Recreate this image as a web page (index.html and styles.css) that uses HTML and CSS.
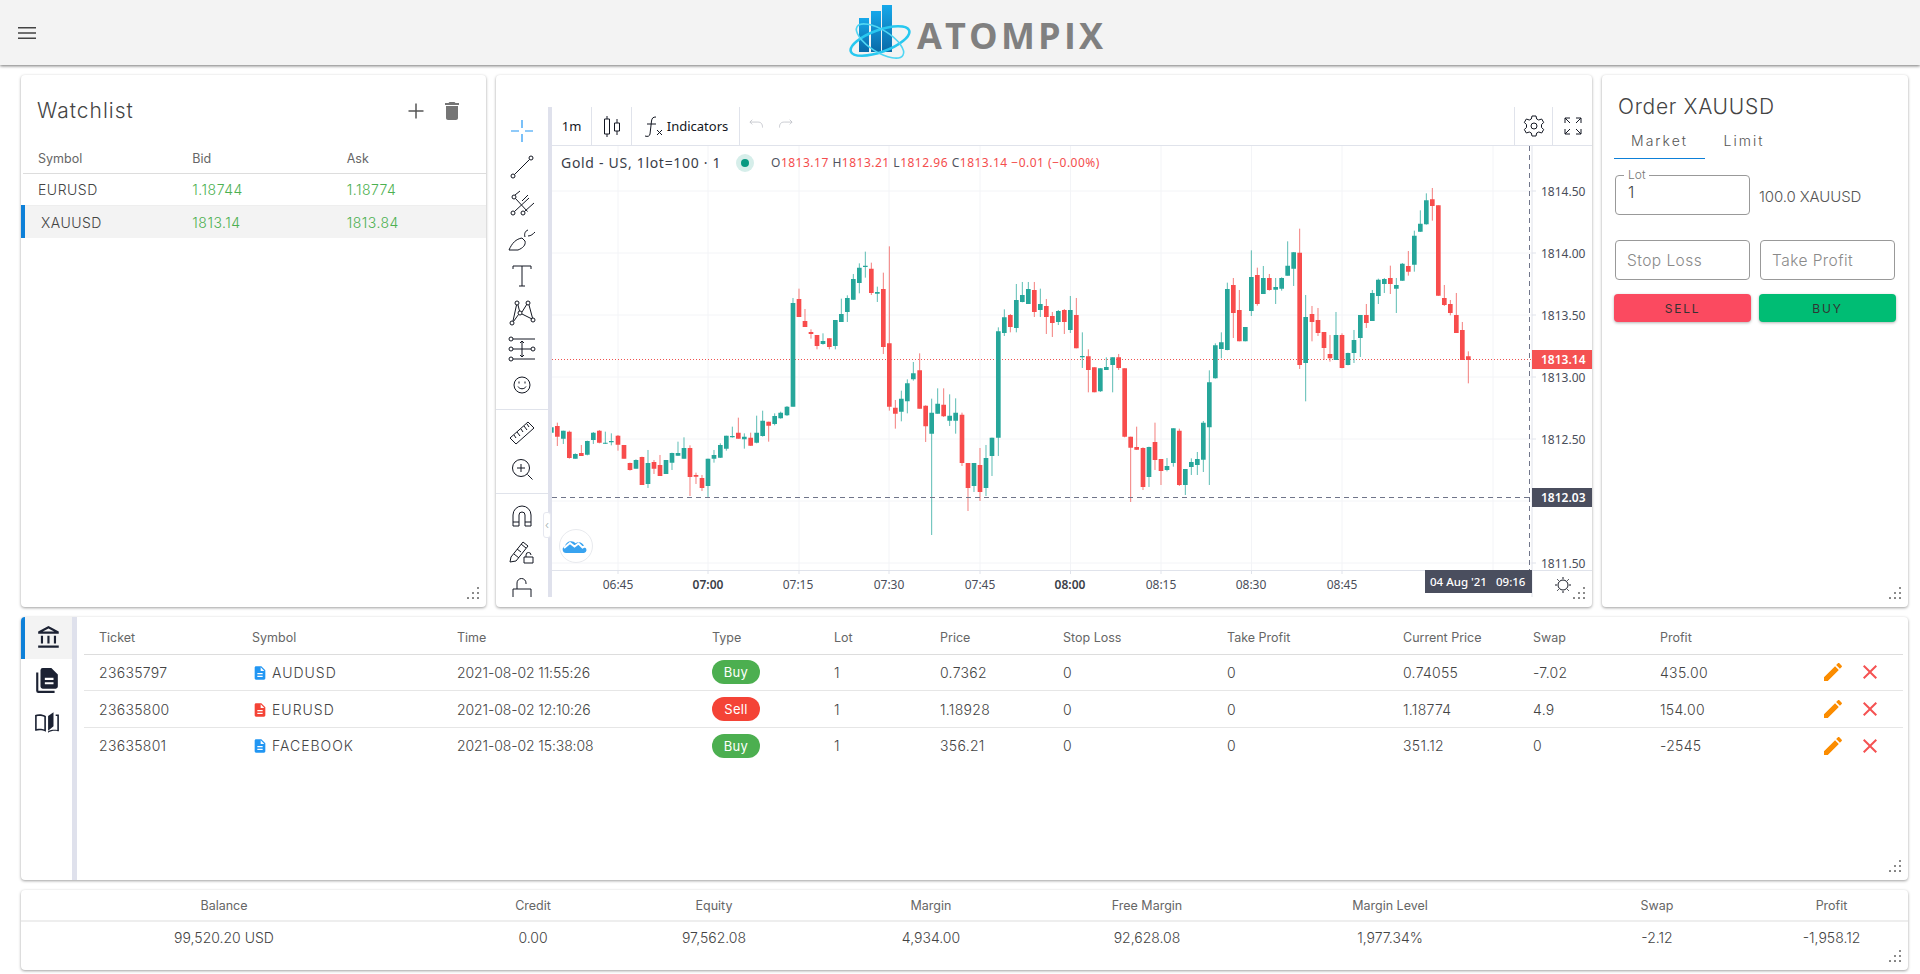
FILE: index.html
```html
<!DOCTYPE html>
<html lang="en">
<head>
<meta charset="utf-8">
<title>Atompix</title>
<link rel="stylesheet" href="styles.css">
</head>
<body>
<header class="topbar">
  <svg class="menu-icon" viewBox="0 0 24 24"><path d="M3 18h18v-1.4H3zm0-5.3h18v-1.4H3zM3 6v1.4h18V6z"/></svg>
  <div class="logo">
    <svg class="logo-mark" viewBox="0 0 66 60">
      <defs><linearGradient id="bar" x1="0" y1="0" x2="0" y2="1"><stop offset="0" stop-color="#16a8ea"/><stop offset="1" stop-color="#0a6aa8"/></linearGradient></defs>
      <rect x="11" y="15" width="10" height="34" fill="url(#bar)"/>
      <rect x="23" y="8" width="10" height="41" fill="url(#bar)"/>
      <rect x="34" y="2" width="10" height="47" fill="url(#bar)"/>
      <ellipse cx="32" cy="38" rx="31" ry="11" transform="rotate(-20 32 38)" fill="none" stroke="#28c8f0" stroke-width="2.6"/>
      <ellipse cx="32" cy="38" rx="27" ry="11" transform="rotate(32 32 38)" fill="none" stroke="#4fd5f3" stroke-width="1.6"/>
    </svg>
    <span class="logo-text">ATOMPIX</span>
  </div>
</header>

<main class="workspace">
  <section class="panel watchlist">
    <div class="panel-head">
      <h2 class="panel-title">Watchlist</h2>
      <div class="head-actions">
        <svg class="icon-plus" viewBox="0 0 24 24"><path d="M12 4.5v15M4.500 12h15"/></svg>
        <svg class="icon-trash" viewBox="0 0 24 24"><path d="M6 19c0 1.100.9 2 2 2h8c1.100 0 2-.9 2-2V7H6v12zM19 4h-3.500l-1-1h-5l-1 1H5v2h14V4z"/></svg>
      </div>
    </div>
    <table class="watch-table">
      <thead><tr><th>Symbol</th><th>Bid</th><th>Ask</th></tr></thead>
      <tbody>
        <tr><td>EURUSD</td><td class="up">1.18744</td><td class="up">1.18774</td></tr>
        <tr class="selected"><td>XAUUSD</td><td class="up">1813.14</td><td class="up">1813.84</td></tr>
      </tbody>
    </table>
    <svg class="grip" viewBox="0 0 12 12"><path d="M11 1v.01M6 6v.01M11 6v.01M1 11v.01M6 11v.01M11 11v.01"/></svg>
  </section>

  <section class="panel chart-panel">
    <div class="chart-frame">
      <nav class="tools">
        <div class="tool-group">
          <span class="tool"><svg class="tool-icon blue" viewBox="0 0 28 28"><path d="M14 3v8M14 17v8M3 14h8M17 14h8"/></svg></span>
          <span class="tool"><svg class="tool-icon" viewBox="0 0 28 28"><circle cx="5" cy="23" r="2"/><circle cx="23" cy="5" r="2"/><path d="M6.500 21.500l15-15"/></svg></span>
          <span class="tool"><svg class="tool-icon" viewBox="0 0 28 28"><circle cx="6" cy="7" r="2"/><circle cx="5" cy="23" r="2"/><circle cx="15" cy="23" r="2"/><path d="M7.500 8.500l12 13M6.500 21.500L21 8M16.500 21.500L26 13M7 5l5-4M14 11l6-6"/></svg></span>
          <span class="tool"><svg class="tool-icon" viewBox="0 0 28 28"><path d="M1 24h9c5-2 8-5 7-9l-3-3c-6 1-10 5-13 12zM17 11c-1-3 0-6 3-7M20 10c3 0 5-2 7-4"/></svg></span>
          <span class="tool"><svg class="tool-icon" viewBox="0 0 28 28"><path d="M5 7V4h18v3M14 4v20M11 24h6"/></svg></span>
          <span class="tool"><svg class="tool-icon" viewBox="0 0 28 28"><circle cx="4" cy="24" r="2"/><circle cx="9" cy="4" r="2"/><circle cx="12" cy="14" r="2"/><circle cx="20" cy="4" r="2"/><circle cx="25" cy="21" r="2"/><path d="M5 22L8.500 6M10 6l1.500 6M5.500 22.500l5-7M14 13l5-8M14 15l10 5M21 6l3.500 13"/></svg></span>
          <span class="tool"><svg class="tool-icon" viewBox="0 0 28 28"><circle cx="3" cy="4" r="2"/><circle cx="3" cy="14" r="2"/><circle cx="25" cy="14" r="2"/><circle cx="3" cy="24" r="2"/><path d="M5 4h22M5 14h18M5 24h22M14 6v16M12 8l2-2 2 2M12 20l2 2 2-2"/></svg></span>
          <span class="tool"><svg class="tool-icon" viewBox="0 0 28 28"><circle cx="14" cy="14" r="8"/><path d="M10 15.500c1.500 3 6.500 3 8 0M11 10.500v2M17 10.500v2"/></svg></span>
        </div>
        <div class="tool-group tool-group-mid">
          <span class="tool"><svg class="tool-icon" viewBox="0 0 28 28"><path d="M2 19L20 3l6 6L8 25zM6 16l2 3M9 13l3 4M13 10l2 3M16 7l3 4M19 5l2 3"/></svg></span>
          <span class="tool"><svg class="tool-icon" viewBox="0 0 28 28"><circle cx="13" cy="13" r="8.500"/><path d="M9 13h8M13 9v8M19.500 19.500l5 5"/></svg></span>
        </div>
        <div class="tool-group tool-group-last">
          <span class="tool"><svg class="tool-icon" viewBox="0 0 28 28"><path d="M5 24V13a9 9 0 0 1 18 0v11h-6V13a3 3 0 0 0-6 0v11zM5 20h6M17 20h6"/></svg></span>
          <span class="tool"><svg class="tool-icon" viewBox="0 0 28 28"><path d="M3 19L15 4l5 4L8 23l-6 1zM6 16l5 4M13 6l5 4M9 11l4 3M16 25v-6h9v6zM18 19v-2a2.500 2.500 0 0 1 5 0"/></svg></span>
          <span class="tool"><svg class="tool-icon" viewBox="0 0 28 28"><path d="M5 26V14h18v12M9 14V8a4.500 4.500 0 0 1 9 0v1"/></svg></span>
        </div>
      </nav>
      <div class="collapse-handle">‹</div>
      <div class="chart-column">
        <div class="chart-toolbar">
          <span class="tb-item tb-interval">1m</span>
          <span class="tb-item tb-candle"><svg class="tb-icon" viewBox="0 0 28 28"><path d="M9 4v3M9 22v3M6.500 7h5v15h-5zM19 7v4M19 19v4M16.500 11h5v8h-5z"/></svg></span>
          <span class="tb-item tb-ind">
            <svg class="tb-icon" viewBox="0 0 28 28"><path d="M17 5c-3 0-4 1-4.500 4l-1.500 13c-.3 2-2 3-5 2M8 12h9M18 18l5 5M23 18l-5 5"/></svg>
            <span>Indicators</span>
          </span>
          <span class="tb-undo">
            <svg class="tb-icon faint" viewBox="0 0 28 28"><path d="M8 12l-3-3 3-3M5 9h10c4 0 6 2 6 7"/></svg>
            <svg class="tb-icon faint" viewBox="0 0 28 28"><path d="M20 12l3-3-3-3M23 9H13c-4 0-6 2-6 7"/></svg>
          </span>
          <span class="tb-spacer"></span>
          <span class="tb-item tb-end"><svg class="tb-icon" viewBox="0 0 28 28"><circle cx="14" cy="14" r="3"/><path d="M12 4h4l.7 3 2 1 3-1 2 3.500-2.200 2v3l2.200 2-2 3.500-3-1-2 1-.7 3h-4l-.7-3-2-1-3 1-2-3.500 2.200-2v-3L4.300 10.500l2-3.500 3 1 2-1z"/></svg></span>
          <span class="tb-item tb-last"><svg class="tb-icon" viewBox="0 0 28 28"><path d="M6 11V6h5M6 6l5 5M17 6h5v5M22 6l-5 5M6 17v5h5M6 22l5-5M22 17v5h-5M22 22l-5-5"/></svg></span>
        </div>
        <svg class="chart" viewBox="552 146 1040 451">
          <g class="grid">
            <path d="M552 191H1532M552 253H1532M552 315H1532M552 377H1532M552 439H1532M552 501H1532M552 563H1532"/>
            <path d="M618 146V570M708 146V570M799 146V570M889 146V570M980 146V570M1070.500 146V570M1161 146V570M1251.500 146V570M1342 146V570M1493 146V570"/>
          </g>
          <path class="price-line" d="M552 359.500H1532"/>
          <g transform="translate(550 170) scale(.33333)">
            <path class="wick-g" d="M4 772V788M40 782V822M76 850V866M112 812V856M130 786V822M166 785V822M184 790V826M258 868V896M294 840V954M348 870V912M366 848V900M384 815V858M402 802V866M474 866V982M492 840V878M511 820V864M529 797V842M547 770V803M583 790V836M620 737V820M638 722V800M674 730V766M692 725V746M711 708V738M729 384V710M819 490V524M856 450V538M874 386V456M892 376V456M910 312V390M928 280V370M946 245V323M982 350V396M1054 662V754M1072 628V730M1090 576V632M1145 686V1095M1163 655V731M1199 673V768M1217 685V791M1272 879V966M1308 825V978M1326 803V918M1345 472V858M1363 418V498M1399 342V487M1417 336V397M1435 336V402M1471 356V441"/>
            <path class="wick-r" d="M22 758V828M58 782V866M94 825V858M148 780V820M204 795V842M222 825V866M240 878V902M276 860V945M312 870V912M330 855V918M420 826V978M438 908V942M456 915V963M565 743V806M602 788V828M656 755V815M747 356V441M765 417V471M783 478V506M801 495V538M838 505V538M964 278V375M1000 308V552M1018 229V722M1036 690V776M1109 550V716M1127 706V816M1181 655V741M1236 728V888M1254 879V1023M1290 834V993M1381 432V487M1453 336V441M1489 387V492"/>
            <path class="body-g" d="M4 772V788M40 782V806M76 852V866M112 813V854M130 788V810M166 818V821M184 813V817M258 870V896M294 879V942M348 870V912M366 849V878M384 849V857M402 834V866M474 866V948M492 855V866M511 825V863M529 797V836M547 798V802M583 800V808M620 788V818M638 752V798M674 738V762M692 728V745M711 710V736M729 399V710M819 513V522M856 450V528M874 432V456M892 384V426M910 327V389M928 293V339M946 287V291M982 366V371M1054 686V725M1072 640V694M1090 610V628M1145 728V791M1163 701V731M1199 737V752M1217 728V752M1272 879V948M1308 864V954M1326 803V858M1345 484V803M1363 442V489M1399 390V474M1417 375V396M1435 357V402M1471 402V420"/>
            <path class="body-r" d="M22 768V800M58 785V864M94 849V858M148 782V818M204 797V824M222 825V866M240 879V900M276 861V945M312 876V896M330 885V918M420 834V921M438 915V920M456 924V954M565 788V806M602 803V827M656 755V767M747 387V441M765 453V471M783 486V492M801 495V528M838 505V531M964 296V369M1000 357V531M1018 520V710M1036 713V731M1109 601V716M1127 707V769M1181 704V739M1236 734V879M1254 879V954M1290 885V966M1381 435V471M1453 360V426M1489 408V441"/>
          </g>
          <g transform="translate(1030 170) scale(.33333)">
            <path class="wick-g" d="M85 420V465M121 378V489M157 487V594M211 594V666M229 562V600M248 562V667M357 830V951M411 864V904M430 775V890M466 897V975M484 865V915M502 846V915M520 753V906M538 601V945M556 520V626M574 487V565M592 338V541M646 471V514M664 241V438M700 288V372M737 324V402M755 322V362M773 214V317M791 246V348M827 375V694M918 426V570M954 548V586M972 480V579M991 435V561M1027 360V453M1045 326V402M1063 324V369M1099 324V429M1117 279V333M1153 182V305M1171 121V186M1189 70V164"/>
            <path class="wick-r" d="M67 426V501M103 417V492M139 384V535M175 538V667M193 592V667M266 552V600M284 595V802M302 800V996M320 770V840M339 832V960M375 758V900M393 867V945M448 776V948M610 324V504M628 360V514M682 293V407M718 312V362M809 176V597M846 408V514M864 414V498M882 486V570M900 495V575M936 490V595M1009 402V474M1081 287V372M1135 243V317M1207 54V152M1225 106V378M1243 345V408M1261 390V436M1279 369V489M1297 456V570M1315 544V640"/>
            <path class="body-g" d="M85 423V456M121 420V480M157 558V562M211 595V664M229 591V600M248 562V585M357 831V921M411 888V900M430 775V879M466 897V945M484 876V891M502 867V885M520 758V869M538 637V772M556 526V625M574 517V537M592 357V540M646 471V514M664 321V423M700 324V372M737 351V359M755 324V356M773 287V317M791 247V296M827 441V579M918 495V570M954 549V585M972 510V549M991 435V504M1027 369V453M1045 329V378M1063 327V342M1099 345V356M1117 281V332M1153 197V284M1171 161V185M1189 91V163"/>
            <path class="body-r" d="M67 438V459M103 420V456M139 435V535M175 559V600M193 592V667M266 562V594M284 595V800M302 800V833M320 831V839M339 834V951M375 816V870M393 867V903M448 782V945M610 345V429M628 420V514M682 315V402M718 324V360M809 248V585M846 432V456M864 450V489M882 486V534M900 552V565M936 495V594M1009 435V459M1081 324V342M1135 288V305M1207 88V108M1225 106V377M1243 384V405M1261 402V429M1279 435V489M1297 480V570M1315 559V570"/>
          </g>
          <path class="cross-line" d="M552 497.500H1532M1529.500 146V570"/>
          <g class="axis">
            <path d="M1532 146V597M552 570.500H1592"/>
            <path d="M1532 191h4M1532 253h4M1532 315h4M1532 377h4M1532 439h4M1532 563h4M618 570v4M708 570v4M799 570v4M889 570v4M980 570v4M1070.500 570v4M1161 570v4M1251.500 570v4M1342 570v4"/>
          </g>
          <g class="axis-text">
            <text x="1541" y="196">1814.50</text>
            <text x="1541" y="258">1814.00</text>
            <text x="1541" y="320">1813.50</text>
            <text x="1541" y="382">1813.00</text>
            <text x="1541" y="444">1812.50</text>
            <text x="1541" y="568">1811.50</text>
          </g>
          <g class="axis-text time-text">
            <text x="618" y="589">06:45</text>
            <text class="strong" x="708" y="589">07:00</text>
            <text x="798" y="589">07:15</text>
            <text x="889" y="589">07:30</text>
            <text x="980" y="589">07:45</text>
            <text class="strong" x="1070" y="589">08:00</text>
            <text x="1161" y="589">08:15</text>
            <text x="1251" y="589">08:30</text>
            <text x="1342" y="589">08:45</text>
          </g>
          <rect class="tag-red" x="1532" y="350" width="60" height="19"/>
          <text class="tag-text" x="1541" y="364">1813.14</text>
          <rect class="tag-dark" x="1532" y="488" width="60" height="19"/>
          <text class="tag-text" x="1541" y="502">1812.03</text>
          <rect class="tag-dark" x="1425" y="570" width="107" height="23"/>
          <text class="tag-text tag-date" x="1430" y="586">04 Aug '21</text>
          <text class="tag-text tag-date" x="1496" y="586">09:16</text>
          <g class="sun"><circle cx="1563" cy="585" r="5"/><path d="M1563 577v2M1563 591v2M1555 585h2M1569 585h2M1557.300 579.300l1.400 1.400M1567.300 589.300l1.400 1.400M1557.300 590.700l1.400-1.400M1567.300 580.700l1.400-1.400"/></g>
          <text class="legend-title" x="561" y="168">Gold - US, 1lot=100 · 1</text>
          <circle class="dot-halo" cx="745" cy="163" r="9"/>
          <circle class="dot-core" cx="745" cy="163" r="4"/>
          <text class="legend-vals" x="771" y="167"><tspan class="lg">O</tspan>1813.17 <tspan class="lg">H</tspan>1813.21 <tspan class="lg">L</tspan>1812.96 <tspan class="lg">C</tspan>1813.14 −0.01 (−0.00%)</text>
          <circle class="tv-badge" cx="576" cy="546" r="16.500"/>
          <path class="tv-cloud" d="M566 553a3.500 3.500 0 0 1-1-6.800c.5-3 3-5 6-5 2 0 3.500.8 4.500 2 1-.6 2-1 3-1 3 0 5.500 2 6 5a3 3 0 0 1-.5 5.800z"/>
          <path class="tv-line" d="M564 548l6-5 4.500 3.500 4-3 4 4 5-2.500"/>
        </svg>
      </div>
    </div>
    <svg class="grip" viewBox="0 0 12 12"><path d="M11 1v.01M6 6v.01M11 6v.01M1 11v.01M6 11v.01M11 11v.01"/></svg>
  </section>

  <section class="panel order">
    <h2 class="panel-title order-title">Order XAUUSD</h2>
    <div class="order-tabs"><span class="order-tab active">Market</span><span class="order-tab">Limit</span></div>
    <div class="order-grid">
      <fieldset class="field"><legend>Lot</legend><span class="field-value">1</span></fieldset>
      <span class="lot-size">100.0 XAUUSD</span>
      <div class="field plain"><span class="field-hint">Stop Loss</span></div>
      <div class="field plain"><span class="field-hint">Take Profit</span></div>
      <button class="btn btn-sell">SELL</button>
      <button class="btn btn-buy">BUY</button>
    </div>
    <svg class="grip" viewBox="0 0 12 12"><path d="M11 1v.01M6 6v.01M11 6v.01M1 11v.01M6 11v.01M11 11v.01"/></svg>
  </section>

  <section class="panel positions">
    <aside class="side-tabs">
      <span class="side-tab active"><svg viewBox="0 0 24 24"><path d="M6.500 10h-2v7h2v-7zm6 0h-2v7h2v-7zm8.500 9H2v2h19v-2zm-2.500-9h-2v7h2v-7zm-7-6.740L16.710 6H6.290l5.210-2.740m0-2.260L2 6v2h19V6l-9.500-5z"/></svg></span>
      <span class="side-tab"><svg viewBox="0 0 24 24"><path d="M8 1h8l6 6v11a2 2 0 0 1-2 2H8a2 2 0 0 1-2-2V3a2 2 0 0 1 2-2zm2 9v2h8v-2zm0 4v2h8v-2zM4 5v17h15v2H4a2 2 0 0 1-2-2V5z" fill-rule="evenodd"/></svg></span>
      <span class="side-tab"><svg viewBox="0 0 24 24"><path d="M1 5.500C3.500 4.500 8 4.500 11 6.500V21c-3-1.700-7-1.700-9-1H1zM2.500 6.800v11.700c2.500-.4 5.500-.3 7 .5V7.400c-2-1.200-5-1.300-7-.6zM13 6.500L18 3v13l-5 4zM20 5h3v15.500h-1c-2.500-.7-6-.5-9 1.500v-1.500c2.500-1.300 5.500-1.500 8.500-1.100V6.500H20z" fill-rule="evenodd"/></svg></span>
    </aside>
    <div class="positions-body">
      <table class="pos-table">
        <colgroup>
          <col class="c-ticket"><col class="c-symbol"><col class="c-time"><col class="c-type"><col class="c-lot"><col class="c-price"><col class="c-sl"><col class="c-tp"><col class="c-cur"><col class="c-swap"><col class="c-profit"><col>
        </colgroup>
        <thead><tr><th>Ticket</th><th>Symbol</th><th>Time</th><th>Type</th><th>Lot</th><th>Price</th><th>Stop Loss</th><th>Take Profit</th><th>Current Price</th><th>Swap</th><th>Profit</th><th></th></tr></thead>
        <tbody>
          <tr>
            <td>23635797</td>
            <td class="sym"><svg class="file-icon buy-c" viewBox="0 0 24 24"><path d="M14 2H6c-1.100 0-1.990.9-1.990 2L4 20c0 1.100.89 2 1.990 2H18c1.100 0 2-.9 2-2V8l-6-6zm2 16H8v-2h8v2zm0-4H8v-2h8v2zm-3-5V3.500L18.500 9H13z"/></svg>AUDUSD</td>
            <td class="stamp">2021-08-02 11:55:26</td><td><span class="chip chip-buy">Buy</span></td><td>1</td><td>0.7362</td><td>0</td><td>0</td><td>0.74055</td><td>-7.02</td><td>435.00</td>
            <td class="row-actions"><svg class="act-edit" viewBox="0 0 24 24"><path d="M3 17.250V21h3.750L17.810 9.940l-3.750-3.750L3 17.250zM20.710 7.040c.39-.39.39-1.020 0-1.410l-2.340-2.340c-.39-.39-1.020-.39-1.410 0l-1.830 1.830 3.750 3.750 1.830-1.830z"/></svg><svg class="act-close" viewBox="0 0 24 24"><path d="M19 6.410L17.590 5 12 10.590 6.410 5 5 6.410 10.590 12 5 17.590 6.410 19 12 13.410 17.590 19 19 17.590 13.410 12z"/></svg></td>
          </tr>
          <tr>
            <td>23635800</td>
            <td class="sym"><svg class="file-icon sell-c" viewBox="0 0 24 24"><path d="M14 2H6c-1.100 0-1.990.9-1.990 2L4 20c0 1.100.89 2 1.990 2H18c1.100 0 2-.9 2-2V8l-6-6zm2 16H8v-2h8v2zm0-4H8v-2h8v2zm-3-5V3.500L18.500 9H13z"/></svg>EURUSD</td>
            <td class="stamp">2021-08-02 12:10:26</td><td><span class="chip chip-sell">Sell</span></td><td>1</td><td>1.18928</td><td>0</td><td>0</td><td>1.18774</td><td>4.9</td><td>154.00</td>
            <td class="row-actions"><svg class="act-edit" viewBox="0 0 24 24"><path d="M3 17.250V21h3.750L17.810 9.940l-3.750-3.750L3 17.250zM20.710 7.040c.39-.39.39-1.020 0-1.410l-2.340-2.340c-.39-.39-1.020-.39-1.410 0l-1.830 1.830 3.750 3.750 1.830-1.830z"/></svg><svg class="act-close" viewBox="0 0 24 24"><path d="M19 6.410L17.590 5 12 10.590 6.410 5 5 6.410 10.590 12 5 17.590 6.410 19 12 13.410 17.590 19 19 17.590 13.410 12z"/></svg></td>
          </tr>
          <tr>
            <td>23635801</td>
            <td class="sym"><svg class="file-icon buy-c" viewBox="0 0 24 24"><path d="M14 2H6c-1.100 0-1.990.9-1.990 2L4 20c0 1.100.89 2 1.990 2H18c1.100 0 2-.9 2-2V8l-6-6zm2 16H8v-2h8v2zm0-4H8v-2h8v2zm-3-5V3.500L18.500 9H13z"/></svg>FACEBOOK</td>
            <td class="stamp">2021-08-02 15:38:08</td><td><span class="chip chip-buy">Buy</span></td><td>1</td><td>356.21</td><td>0</td><td>0</td><td>351.12</td><td>0</td><td>-2545</td>
            <td class="row-actions"><svg class="act-edit" viewBox="0 0 24 24"><path d="M3 17.250V21h3.750L17.810 9.940l-3.750-3.750L3 17.250zM20.710 7.040c.39-.39.39-1.020 0-1.410l-2.340-2.340c-.39-.39-1.020-.39-1.410 0l-1.830 1.830 3.750 3.750 1.830-1.830z"/></svg><svg class="act-close" viewBox="0 0 24 24"><path d="M19 6.410L17.590 5 12 10.590 6.410 5 5 6.410 10.590 12 5 17.590 6.410 19 12 13.410 17.590 19 19 17.590 13.410 12z"/></svg></td>
          </tr>
        </tbody>
      </table>
    </div>
    <svg class="grip" viewBox="0 0 12 12"><path d="M11 1v.01M6 6v.01M11 6v.01M1 11v.01M6 11v.01M11 11v.01"/></svg>
  </section>

  <section class="panel summary">
    <div class="sum-grid sum-head">
      <span>Balance</span><span>Credit</span><span>Equity</span><span>Margin</span><span>Free Margin</span><span>Margin Level</span><span>Swap</span><span>Profit</span>
    </div>
    <div class="sum-grid sum-vals">
      <span>99,520.20 USD</span><span>0.00</span><span>97,562.08</span><span>4,934.00</span><span>92,628.08</span><span>1,977.34%</span><span>-2.12</span><span>-1,958.12</span>
    </div>
    <svg class="grip" viewBox="0 0 12 12"><path d="M11 1v.01M6 6v.01M11 6v.01M1 11v.01M6 11v.01M11 11v.01"/></svg>
  </section>
</main>
</body>
</html>
```

FILE: styles.css
```css
* { box-sizing: border-box; }
html, body { margin: 0; height: 100%; }
body {
  background: #fff;
  color: #444;
  font-family: Inter, "Noto Sans", sans-serif;
  font-weight: 300;
  font-size: 14px;
  overflow: hidden;
}

.topbar {
  height: 65px;
  background: #f3f3f3;
  box-shadow: 0 1px 3px rgba(0,0,0,.55);
  display: flex;
  align-items: center;
  padding-left: 15px;
  position: relative;
  z-index: 2;
}
.menu-icon { width: 24px; height: 24px; fill: #444; }
.logo { display: flex; align-items: center; margin-left: 809px; height: 65px; }
.logo-mark { width: 66px; height: 60px; }
.logo-text {
  font-family: "Open Sans", sans-serif;
  font-weight: 700;
  font-size: 36px;
  letter-spacing: 3.200px;
  color: #808080;
  margin-left: 3px;
  line-height: 1;
  padding-top: 6px;
}

.workspace {
  display: grid;
  grid-template-columns: 465px 1096px 306px;
  grid-template-rows: 532px 263px 80px;
  gap: 10px;
  padding: 10px 12px 0 21px;
}
.panel {
  background: #fff;
  border-radius: 4px;
  box-shadow: 0 1px 3px rgba(0,0,0,.38);
  position: relative;
  overflow: hidden;
}
.grip {
  position: absolute;
  right: 7px;
  bottom: 8px;
  width: 12px;
  height: 12px;
  fill: none;
  stroke: #666;
  stroke-width: 2;
  stroke-linecap: round;
}

/* watchlist */
.panel-head {
  display: flex;
  align-items: center;
  justify-content: space-between;
  padding: 23px 22px 0 16px;
}
.panel-title { margin: 0; font-size: 21px; font-weight: 300; color: #444; line-height: 26px; letter-spacing: 1px; }
.head-actions { display: flex; gap: 12px; }
.icon-plus { width: 24px; height: 24px; fill: none; stroke: #555; stroke-width: 1.500; }
.icon-trash { width: 24px; height: 24px; fill: #757575; }
.watch-table { width: 100%; border-collapse: collapse; table-layout: fixed; margin-top: 20px; }
.watch-table th {
  text-align: left;
  font-weight: 400;
  font-size: 12.500px;
  color: #666;
  height: 29px;
  padding: 0 0 0 15px;
  border-bottom: 1px solid #ddd;
}
.watch-table td { height: 32.500px; padding: 0 0 0 15px; letter-spacing: .5px; border-bottom: 1px solid #eee; }
.selected td { background: #f3f3f3; border-bottom: 0; }
.selected td:first-child { border-left: 4px solid #0d80d8; padding-left: 16px; }
.up { color: #4cb050; }

/* chart */
.chart-panel { padding-top: 32px; }
.chart-frame { display: flex; height: 490px; position: relative; }
.tools {
  width: 56px;
  flex: none;
  border-right: 4px solid #dfe1ec;
  overflow: hidden;
}
.tool-group { padding: 6px 0; border-bottom: 1px solid #e0e3eb; }
.tool-group-mid { padding-top: 4px; }
.tool-group-last { border-bottom: 0; padding-top: 4px; }
.tool { display: flex; height: 36.300px; align-items: center; justify-content: center; }
.tool-icon { width: 28px; height: 28px; fill: none; stroke: #131722; stroke-width: 1; }
.tool-icon.blue { stroke: #2196f3; stroke-width: 1.200; }
.collapse-handle {
  position: absolute;
  left: 47px;
  top: 405px;
  width: 8px;
  height: 26px;
  background: #fff;
  border: 1px solid #e6e8f0;
  border-radius: 3px;
  color: #9aa;
  font-size: 11px;
  line-height: 24px;
  text-align: center;
}
.chart-column { width: 1040px; display: flex; flex-direction: column; }
.chart-toolbar {
  height: 39px;
  display: flex;
  align-items: stretch;
  border-bottom: 1px solid #e0e3eb;
  font-family: "Noto Sans", sans-serif;
  font-weight: 400;
  font-size: 13px;
  color: #131722;
}
.tb-item { display: flex; align-items: center; justify-content: center; border-right: 1px solid #e0e3eb; }
.tb-interval { width: 40px; }
.tb-candle { width: 40px; }
.tb-ind { width: 108px; gap: 0; padding-right: 4px; }
.tb-undo { display: flex; align-items: center; gap: 6px; padding-left: 6px; }
.tb-spacer { flex: 1; }
.tb-end { width: 39px; border-left: 1px solid #e0e3eb; }
.tb-last { width: 39px; border-right: 0; }
.tb-icon { width: 28px; height: 28px; flex: none; fill: none; stroke: #131722; stroke-width: 1; }
.tb-icon.faint { width: 22px; height: 22px; stroke: #bbbec6; }
.chart { display: block; width: 1040px; height: 451px; font-family: "Noto Sans", sans-serif; font-weight: 400; }
.grid path { fill: none; stroke: #f3f4f7; stroke-width: 1; }
.price-line { stroke: #ef5350; stroke-width: 1; stroke-dasharray: 1 2; fill: none; }
.cross-line { stroke: #70758a; stroke-width: 1; stroke-dasharray: 5 4; fill: none; }
.wick-g { stroke: #26a69a; stroke-width: 3; fill: none; opacity: .75; }
.wick-r { stroke: #ef5350; stroke-width: 3; fill: none; opacity: .75; }
.body-g { stroke: #26a69a; stroke-width: 14; fill: none; }
.body-r { stroke: #f84c4c; stroke-width: 14; fill: none; }
.axis path { stroke: #e0e3eb; stroke-width: 1; fill: none; }
.axis-text { font-size: 12px; fill: #4a4e5a; }
.time-text { text-anchor: middle; }
.strong { font-weight: 600; fill: #3c3f49; }
.tag-red { fill: #f55252; }
.tag-dark { fill: #4a4e5e; }
.tag-text { font-size: 12px; font-weight: 600; fill: #fff; }
.tag-date { font-size: 11.500px; font-weight: 500; }
.sun { fill: none; stroke: #131722; stroke-width: 1; }
.legend-title { font-size: 14px; fill: #3a3d48; letter-spacing: .7px; }
.legend-vals { font-size: 12px; fill: #f44d4d; letter-spacing: .5px; }
.lg { fill: #50535e; }
.dot-halo { fill: #d6eeea; }
.dot-core { fill: #089981; }
.tv-badge { fill: #fff; stroke: #e8eaee; stroke-width: 1; }
.tv-cloud { fill: #38a3f0; }
.tv-line { fill: none; stroke: #fff; stroke-width: 2; }

/* order */
.order { padding: 19px 12px 0 12px; }
.order-title { padding-left: 4px; letter-spacing: .7px; }
.order-tabs { display: flex; margin-top: 6px; }
.order-tab { width: 91px; height: 33px; text-align: center; line-height: 30px; font-size: 14px; letter-spacing: 2px; color: #555; font-weight: 300; }
.order-tab.active { border-bottom: 1px solid #0d80d8; }
.order-tabs .order-tab:not(.active) { width: 78px; }
.order-grid {
  display: grid;
  grid-template-columns: 137px 137px;
  column-gap: 8px;
  grid-template-rows: 44px 40px 28px;
  row-gap: 23px;
  margin-top: 14px;
}
.order-grid > * { min-width: 0; }
.field { border: 1px solid #999; border-radius: 4px; margin: 0 0 0 1px; padding: 0 11px; width: 135px; height: 40px; display: flex; align-items: center; }
fieldset.field { display: block; height: 46px; padding: 0 12px; margin-top: -4px; }
.field legend { font-size: 12px; color: #777; padding: 0 4px; margin-left: -4px; line-height: 12px; }
.field-value { font-size: 16px; display: block; line-height: 22px; }
.lot-size { font-size: 15px; align-self: center; color: #555; white-space: nowrap; padding-top: 2px; letter-spacing: -.1px; }
.field-hint { font-size: 15.500px; color: #8a8a8a; letter-spacing: .45px; white-space: nowrap; }
.order-grid .plain { margin-top: 0; }
.btn {
  border: 0;
  border-radius: 4px;
  height: 28px;
  font-family: inherit;
  font-size: 12px;
  font-weight: 400;
  letter-spacing: 1.800px;
  color: #333;
  box-shadow: 0 1px 3px rgba(0,0,0,.3);
  margin-top: -9px;
}
.btn-sell { background: #fb4a60; }
.btn-buy { background: #00bd74; }

/* positions */
.positions { display: flex; grid-column: 1 / -1; }
.side-tabs { width: 56px; flex: none; border-right: 5px solid #dfe1ec; display: flex; flex-direction: column; }
.side-tab { height: 42px; display: flex; align-items: center; justify-content: center; }
.side-tab svg { width: 26px; height: 26px; fill: #1c2233; }
.side-tab.active { background: #f3f3f3; border-left: 4px solid #0d80d8; }
.positions-body { flex: 1; padding: 0 5px 0 7px; }
.pos-table { width: 100%; border-collapse: collapse; table-layout: fixed; }
.c-ticket { width: 153px; } .c-symbol { width: 205px; } .c-time { width: 255px; } .c-type { width: 122px; }
.c-lot { width: 106px; } .c-price { width: 123px; } .c-sl { width: 164px; } .c-tp { width: 176px; }
.c-cur { width: 130px; } .c-swap { width: 127px; } .c-profit { width: 155px; }
.pos-table th { text-align: left; font-weight: 400; font-size: 12.500px; color: #666; height: 37px; padding: 4px 0 0 15px; border-bottom: 1px solid #ddd; }
.pos-table td { height: 36.700px; padding: 0 0 0 15px; border-bottom: 1px solid #e6e6e6; white-space: nowrap; letter-spacing: .3px; }
.pos-table td.sym { letter-spacing: 1px; }
.pos-table td.stamp { letter-spacing: -.1px; }
.pos-table tr:last-child td { border-bottom: 0; }
.file-icon { width: 16px; height: 16px; vertical-align: -3px; margin-right: 4px; }
.buy-c { fill: #2196f3; } .sell-c { fill: #f44336; }
.chip { display: inline-block; width: 48px; height: 24px; border-radius: 12px; color: #fff; text-align: center; line-height: 24px; font-size: 13px; font-weight: 400; vertical-align: middle; }
.chip-buy { background: #4caf50; } .chip-sell { background: #f44336; }
.row-actions { text-align: left; }
.row-actions svg { width: 24px; height: 24px; vertical-align: middle; }
.act-edit { fill: #fb8c00; margin-left: 6px; }
.act-close { fill: #f55252; margin-left: 13px; }

/* summary */
.summary { grid-column: 1 / -1; }
.sum-grid { display: grid; grid-template-columns: 406px 212px 150px 284px 148px 338px 196px 153px; text-align: center; }
.sum-head { height: 32px; align-items: center; font-size: 12.500px; font-weight: 400; color: #666; border-bottom: 2px solid #eee; }
.sum-vals { height: 30px; align-items: center; }
```
